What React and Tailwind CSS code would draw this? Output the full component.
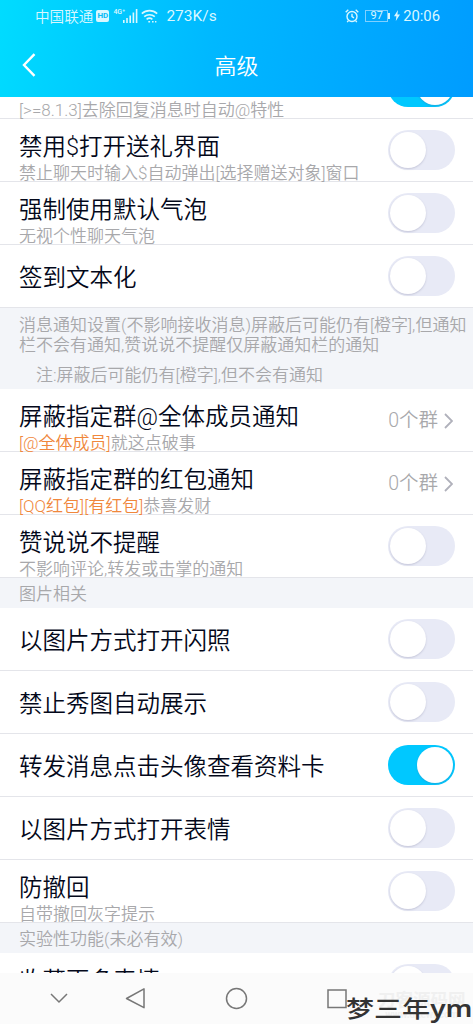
import React, { useState } from "react";

const groups = [
  {
    rows: [
      { id: "gift", title: "禁用$打开送礼界面", desc: "禁止聊天时输入$自动弹出[选择赠送对象]窗口" },
      { id: "bubble", title: "强制使用默认气泡", desc: "无视个性聊天气泡" },
      { id: "sign", title: "签到文本化" },
    ],
  },
  {
    notice: true,
    rows: [
      { id: "atAll", title: "屏蔽指定群@全体成员通知", tag: "[@全体成员]", desc: "就这点破事", value: "0个群" },
      { id: "redPacket", title: "屏蔽指定群的红包通知", tag: "[QQ红包][有红包]", desc: "恭喜发财", value: "0个群" },
      { id: "like", title: "赞说说不提醒", desc: "不影响评论,转发或击掌的通知" },
    ],
  },
  {
    label: "图片相关",
    rows: [
      { id: "flash", title: "以图片方式打开闪照" },
      { id: "show", title: "禁止秀图自动展示" },
      { id: "card", title: "转发消息点击头像查看资料卡" },
      { id: "emoji", title: "以图片方式打开表情" },
      { id: "recall", title: "防撤回", desc: "自带撤回灰字提示" },
    ],
  },
  {
    label: "实验性功能(未必有效)",
    rows: [{ id: "more", title: "收藏更多表情", desc: " " }],
  },
];

function Switch({ on, onClick }) {
  return (
    <button
      type="button"
      role="switch"
      aria-checked={on}
      onClick={onClick}
      className={`flex h-10 w-[67px] shrink-0 items-center rounded-full px-0.5 ${
        on ? "justify-end bg-[#00c8ff]" : "justify-start bg-[#e8eaf6]"
      }`}
    >
      <span className="size-9 rounded-full bg-white shadow-[0_1px_2px_rgba(90,90,130,0.25)]" />
    </button>
  );
}

function Row({ row, on, onToggle }) {
  return (
    <div className="flex h-[63px] shrink-0 justify-between border-b border-[#e4e5ea] bg-white pr-[18px] pl-[19px]">
      {row.desc ? (
        <div className="pt-[10.5px] whitespace-nowrap">
          <div className="min-h-[34px] text-[23.5px] leading-[34px] font-[350] text-[#03081a]">{row.title}</div>
          <div className="-mt-px text-[17px] leading-5 font-[350] text-[#a8a8ab]">
            {row.tag && <span className="text-[#f0873c]">{row.tag}</span>}
            {row.desc}
          </div>
        </div>
      ) : (
        <div className="self-center pt-1 text-[23.5px] leading-[34px] font-[350] whitespace-nowrap text-[#03081a]">
          {row.title}
        </div>
      )}
      {row.value ? (
        <div className="flex items-center gap-1.5 pt-0.5 pr-0.5 text-[19.5px] font-[350] text-[#a8a8ab]">
          <span>{row.value}</span>
          <svg viewBox="0 0 9 16" className="h-4 w-[9px]" fill="none" stroke="#b0b1bb" strokeWidth="1.8">
            <path d="M1 1l7 7-7 7" />
          </svg>
        </div>
      ) : (
        <div className="flex items-center">
          <Switch on={on} onClick={onToggle} />
        </div>
      )}
    </div>
  );
}

function StatusBar() {
  return (
    <div className="flex h-8 items-center justify-between pr-[33px] pl-[35px] text-[#d9f7ff]">
      <div className="flex items-center">
        <span className="pt-0.5 text-[14.6px] leading-none font-[350]">中国联通</span>
        <span className="ml-[3px] flex h-3 w-[13px] items-center justify-center rounded-[2px] bg-[#d9f7ff] text-[8px] leading-none font-bold text-[#08bcf5]">
          HD
        </span>
        <span className="ml-1 -mt-2 w-[10px] text-[7px] leading-none font-medium">4G⁺</span>
        <svg viewBox="0 0 15 14" className="h-3.5 w-[15px]" fill="currentColor">
          <path d="M0 11h1.600v3H0zM3.200 9h1.600v5h-1.600zM6.400 6.500h1.600V14h-1.600zM9.600 3.500h1.600V14h-1.600zM12.800 0h1.600v14h-1.600z" />
        </svg>
        <svg viewBox="0 0 17 14" className="ml-[3px] h-3.5 w-[17px]" fill="none" stroke="currentColor" strokeWidth="1.6">
          <path d="M.8 4.6a11.500 11.500 0 0 1 15.400 0M3.200 7.700a8 8 0 0 1 10.600 0M5.600 10.400a4.500 4.500 0 0 1 5.800 0" />
          <path d="M7.300 12.700h1.800M11 12.700h1.600M14 12.700h1.400" />
        </svg>
        <span className="ml-2 pt-0.5 text-[15.5px] leading-none">273K/s</span>
      </div>
      <div className="flex items-center">
        <svg viewBox="0 0 14 14" className="size-3.5" fill="none" stroke="currentColor" strokeWidth="1.4">
          <circle cx="7" cy="7.5" r="5" />
          <path d="M7 4.800v2.900l2 1.200M.7 3.200 3.300.8M13.300 3.200 10.700.8M3.400 11.600l-1.200 1.600M10.600 11.600l1.200 1.600" />
        </svg>
        <span className="ml-1.5 flex h-3 w-[23px] items-center justify-center border border-[#7fd0ff] text-[11px] leading-none">
          97
        </span>
        <span className="h-1.5 w-0.5 bg-[#d9f7ff]" />
        <svg viewBox="0 0 6 11" className="ml-1 h-[11px] w-1.5" fill="currentColor">
          <path d="M4 0 0 6.200h2.400L1.800 11 6 4.600H3.400z" />
        </svg>
        <span className="ml-[3px] text-[14.8px] leading-none">20:06</span>
      </div>
    </div>
  );
}

function NavBar() {
  return (
    <div className="relative h-[51px] shrink-0 bg-[#fbfbfb]">
      <svg viewBox="0 0 473 51" className="h-[51px] w-[473px]" fill="none" stroke="#777" strokeWidth="1.5">
        <path d="m51 21 8 8 8-8" />
        <path d="M144 15.800v18.900L126.500 25.500z" strokeLinejoin="round" />
        <circle cx="236.500" cy="25.500" r="10" />
        <rect x="328" y="17" width="18" height="17.500" />
      </svg>
      <div className="absolute top-[18px] left-[378px] text-center font-bold whitespace-nowrap text-[#f0f0f0]">
        <div className="text-[17.5px] leading-[18px]">刀客源码网</div>
        <div className="text-[10px] leading-[11px]">www.dkewl.com</div>
      </div>
      <div className="absolute top-[21px] left-[346px] origin-left scale-x-[1.22] text-[23px] leading-[28px] font-medium whitespace-nowrap text-[#333]">
        梦三年<span className="font-['Noto_Sans',sans-serif] font-semibold">ym</span>
      </div>
    </div>
  );
}

function App() {
  const [enabled, setEnabled] = useState({ reply: true, card: true });

  const toggle = (id) => setEnabled((prev) => ({ ...prev, [id]: !prev[id] }));

  return (
    <div className="flex h-[1024px] w-[473px] flex-col overflow-hidden bg-white font-[Roboto,'Noto_Sans_CJK_SC',sans-serif]">
      <header className="h-[97px] shrink-0 bg-linear-[100deg,#00dcff_0%,#00b8ff_45%,#009cff_100%]">
        <StatusBar />
        <div className="grid h-[65px] grid-cols-3 items-center text-white">
          <svg viewBox="0 0 14 24" className="ml-[22px] h-6 w-3.5" fill="none" stroke="currentColor" strokeWidth="2.4">
            <path d="M12.500 1.200 2 12l10.500 10.800" />
          </svg>
          <h1 className="pt-1 text-center text-[22px] leading-8 font-[350]">高级</h1>
        </div>
      </header>

      <main className="flex min-h-0 flex-1 flex-col overflow-hidden">
        {/* only the tail of the first row is scrolled into view */}
        <div className="flex h-[22px] shrink-0 flex-col justify-end overflow-hidden">
          <Row
            row={{ desc: "[>=8.1.3]去除回复消息时自动@特性" }}
            on={enabled.reply}
            onToggle={() => toggle("reply")}
          />
        </div>
        {groups.map((group, i) => (
          <section key={i} className="flex shrink-0 flex-col">
            {group.notice && (
              <div className="h-[81px] bg-[#f3f5f9] pt-[7px] pl-[19px] text-[17px] leading-5 font-[350] whitespace-nowrap text-[#a8a8ab]">
                <p>消息通知设置(不影响接收消息)屏蔽后可能仍有[橙字],但通知</p>
                <p>栏不会有通知,赞说说不提醒仅屏蔽通知栏的通知</p>
                <p className="mt-2.5 pl-[17px]">注:屏蔽后可能仍有[橙字],但不会有通知</p>
              </div>
            )}
            {group.label && (
              <div className="h-[30px] bg-[#f3f5f9] pt-px pl-[19px] text-[17px] leading-[30px] font-[350] text-[#a8a8ab]">
                {group.label}
              </div>
            )}
            {group.rows.map((row) => (
              <Row key={row.id} row={row} on={!!enabled[row.id]} onToggle={() => toggle(row.id)} />
            ))}
          </section>
        ))}
      </main>
      <NavBar />
    </div>
  );
}

export default App;
